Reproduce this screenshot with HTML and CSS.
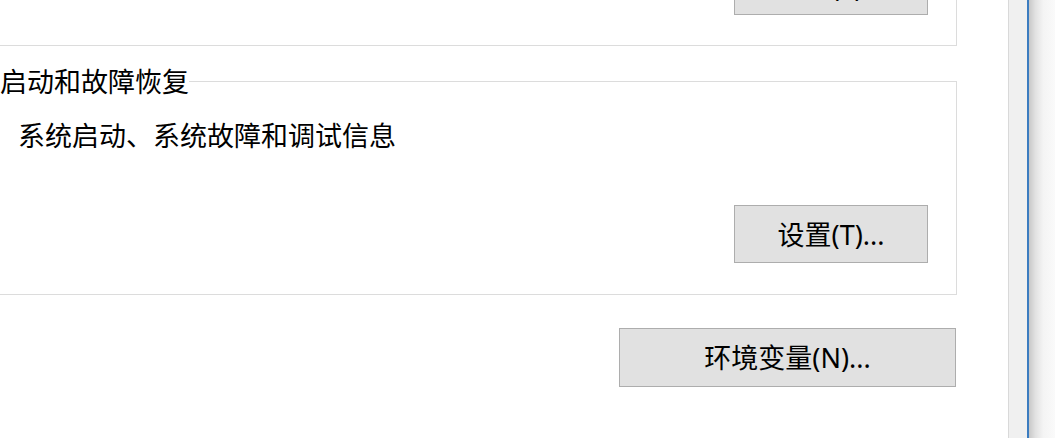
FILE: index.html
```html
<!DOCTYPE html>
<html lang="zh-CN">
<head>
  <meta charset="UTF-8" />
  <meta name="viewport" content="width=device-width, initial-scale=1.0"/>
  <title>系统属性 - 高级</title>
  <link rel="stylesheet" href="styles.css">
</head>
<body>
  <div class="window">
    <div class="client">
      <div class="content">
        <fieldset class="group group-top">
          <div class="actions">
            <button class="btn btn-small">设置(S)...</button>
          </div>
        </fieldset>

        <fieldset class="group group-startup">
          <legend>启动和故障恢复</legend>
          <p class="desc">系统启动、系统故障和调试信息</p>
          <div class="actions">
            <button class="btn btn-small">设置(T)...</button>
          </div>
        </fieldset>

        <div class="actions">
          <button class="btn btn-wide">环境变量(N)...</button>
        </div>
      </div>
    </div>

    <div class="frame">
      <div class="frame-face"></div>
      <div class="frame-edge"></div>
      <div class="frame-shadow"></div>
    </div>
  </div>
</body>
</html>
```

FILE: styles.css
```css
    * {
      box-sizing: border-box;
    }

    html, body {
      margin: 0;
      height: 100%;
      overflow: hidden;
    }

    body {
      background: #ffffff;
      color: #000000;
      font-family: "Noto Sans", "Noto Sans CJK SC", sans-serif;
      font-size: 27px;
    }

    .window {
      display: flex;
      height: 100vh;
    }

    .client {
      flex: 1;
      background: #ffffff;
      overflow: hidden;
      padding-right: 51px;
    }

    .content {
      margin-left: -30px;
    }

    .group {
      margin: 0;
      border: 1px solid #dcdcdc;
      padding: 0 28px 31px 29px;
      min-width: 0;
    }

    .group-top {
      margin-top: -60px;
      padding-top: 16px;
      padding-bottom: 30px;
    }

    .group-startup {
      margin-top: 17px;
      padding-top: 18px;
    }

    legend {
      padding: 0;
      line-height: 36px;
      font-family: "Noto Sans CJK SC", sans-serif;
    }

    .desc {
      margin: 0 0 52px 18px;
      line-height: 36px;
      font-family: "Noto Sans CJK SC", sans-serif;
    }

    .actions {
      display: flex;
      justify-content: flex-end;
    }

    .content > .actions {
      margin-top: 33px;
      padding-right: 1px;
    }

    .btn {
      background: #e1e1e1;
      border: 1px solid #adadad;
      border-radius: 0;
      color: #000000;
      font-family: inherit;
      font-size: 27px;
      line-height: 1;
      padding: 0;
      cursor: pointer;
    }

    .btn:hover {
      background: #e5f1fb;
      border-color: #0078d7;
    }

    .btn-small {
      width: 194px;
      height: 58px;
    }

    .btn-wide {
      width: 337px;
      height: 59px;
    }

    .frame {
      flex: none;
      width: 47px;
      display: flex;
    }

    .frame-face {
      width: 19px;
      background: #f0f0f0;
      border-left: 1px solid #d9d9d9;
    }

    .frame-edge {
      width: 2px;
      background: #3b7cc0;
    }

    .frame-shadow {
      flex: 1;
      background: linear-gradient(to right, #c8c8c8, #e2e2e2 25%, #f4f4f4 55%, #fafafa);
    }
```
